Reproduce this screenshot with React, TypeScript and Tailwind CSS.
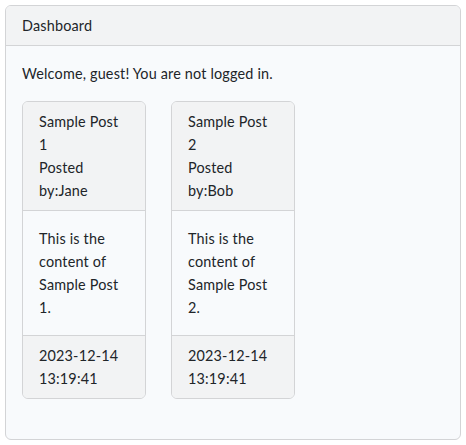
const posts = [
  { id: 1, title: "Sample Post 1", author: "Jane", body: "This is the content of Sample Post 1.", date: "2023-12-14 13:19:41" },
  { id: 2, title: "Sample Post 2", author: "Bob", body: "This is the content of Sample Post 2.", date: "2023-12-14 13:19:41" },
];

export default function App() {
  return (
    <main
      className="min-h-[445px] w-full bg-white pl-[5px] pt-[5px] text-[14.4px] leading-[23px] tracking-[0.18px] text-[#212529]"
      style={{ fontFamily: "Lato, 'Noto Sans', sans-serif" }}
    >
      <section className="w-[456px] overflow-hidden rounded-[6px] border border-[#d3d4d6] bg-[#f8fafc]">
        <div className="border-b border-[#d3d4d6] bg-[#f2f3f4] px-4 py-2">Dashboard</div>

        <div className="p-4">
          <p className="mb-4">Welcome, guest! You are not logged in.</p>

          <div className="mb-6 flex gap-[25px]">
            {posts.map((post) => (
              <article
                key={post.id}
                className="flex w-[124px] flex-col overflow-hidden rounded-[6px] border border-[#d3d4d6] bg-[#f8fafc]"
              >
                <div className="border-b border-[#d3d4d6] bg-[#f2f3f4] px-4 py-2">
                  {post.title}
                  <br />
                  Posted by:{post.author}
                </div>
                <div className="p-4">{post.body}</div>
                <div className="border-t border-[#d3d4d6] bg-[#f2f3f4] px-4 py-2">{post.date}</div>
              </article>
            ))}
          </div>
        </div>
      </section>
    </main>
  );
}
